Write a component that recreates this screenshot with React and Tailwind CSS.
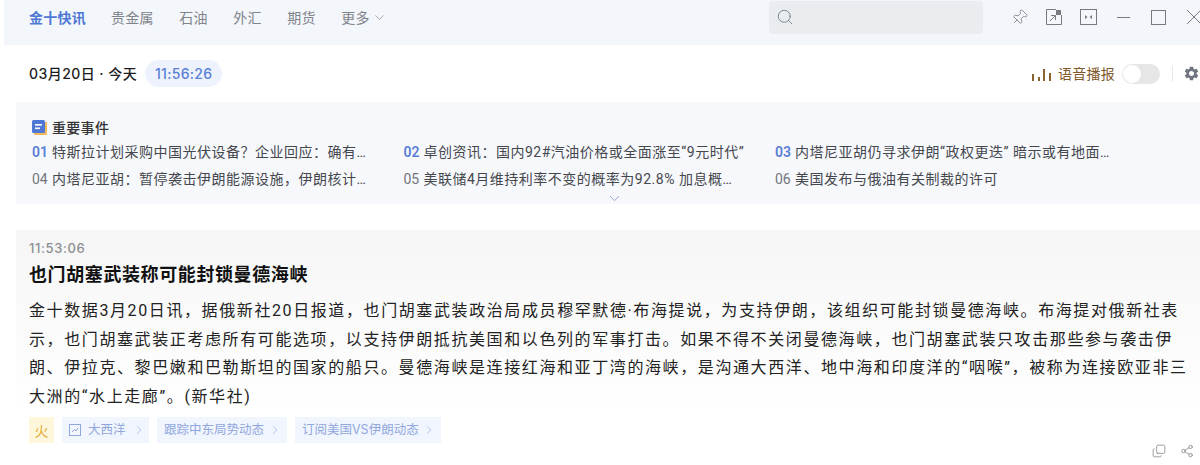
import { ChevronDown, ChevronRight, Search, Copy, Share2, Pin } from 'lucide-react'
import { MdSettings } from 'react-icons/md'

const FONT = 'font-["Inter","Noto_Sans_CJK_SC",sans-serif]'

const TABS = ['贵金属', '石油', '外汇', '期货']

const EVENTS = [
  { no: '01', text: '特斯拉计划采购中国光伏设备？企业回应：确有意向但尚未最终确认', hot: true, w: 'w-[323px]' },
  { no: '02', text: '卓创资讯：国内92#汽油价格或全面涨至“9元时代”', hot: true, w: 'w-[330px]' },
  { no: '03', text: '内塔尼亚胡仍寻求伊朗“政权更迭” 暗示或有地面行动的可能性', hot: true, w: 'w-[323px]' },
  { no: '04', text: '内塔尼亚胡：暂停袭击伊朗能源设施，伊朗核计划已被严重削弱', w: 'w-[323px]' },
  { no: '05', text: '美联储4月维持利率不变的概率为92.8% 加息概率有所上升至百分之七', w: 'w-[315px]' },
  { no: '06', text: '美国发布与俄油有关制裁的许可', w: 'w-[323px]' },
]

function TopBar() {
  return (
    <div className="ml-[4px] h-[45px] pb-[11px] bg-[#f3f6fa] flex items-center pl-[25px] text-[14px] tracking-[0.25px] text-[#81848a] whitespace-nowrap">
      <span className="font-bold text-[#4f78d6]">金十快讯</span>
      <div className="flex gap-[25.5px] ml-[25px]">
        {TABS.map(t => <span key={t}>{t}</span>)}
      </div>
      <span className="ml-[25.5px]">更多</span>
      <ChevronDown size={15} strokeWidth={1.1} className="ml-[2px] shrink-0" />
      <div className="ml-[382px] w-[214px] h-[33px] shrink-0 rounded-[4px] bg-[#e9edf0] flex items-center pl-[7px]">
        <Search size={18} strokeWidth={1.1} className="text-[#6f7479]" />
      </div>
      <div className="flex items-center ml-[28px] text-[#777b80]">
        <Pin size={17} strokeWidth={1.1} className="rotate-45 shrink-0" />
        <svg width="16" height="16" viewBox="0 0 16 16" fill="none" stroke="currentColor" strokeWidth="1" className="ml-[18px] shrink-0">
          <path d="M10 .5H.5v15h15V6" />
          <rect x="10" y="1" width="5" height="5" fill="currentColor" stroke="none" />
          <path d="M4 12 9.500 6.500M5 6.500H9.500V11" />
        </svg>
        <svg width="17" height="16" viewBox="0 0 17 16" fill="none" stroke="currentColor" strokeWidth="1" className="ml-[18px] shrink-0">
          <rect x="0.5" y="0.500" width="16" height="15" />
          <path d="M5 6v4l2.500-2zM12 6v4l-2.500-2z" fill="currentColor" stroke="none" />
        </svg>
        <svg width="14" height="14" viewBox="0 0 14 14" stroke="currentColor" strokeWidth="1" className="ml-[20px] shrink-0">
          <path d="M0 7.500h13" />
        </svg>
        <svg width="15" height="15" viewBox="0 0 15 15" fill="none" stroke="currentColor" strokeWidth="1" className="ml-[20px] shrink-0">
          <rect x="0.500" y="0.500" width="14" height="14" />
        </svg>
        <svg width="14" height="14" viewBox="0 0 14 14" stroke="currentColor" strokeWidth="1" className="ml-[21px] shrink-0">
          <path d="M0 0 14 14M14 0 0 14" />
        </svg>
      </div>
    </div>
  )
}

function DateRow() {
  return (
    <div className="h-[57px] flex items-center pl-[29px] bg-white">
      <span className="text-[14px] font-medium tracking-[0.45px] text-[#1c1c1e] whitespace-pre">03月20日 · 今天</span>
      <span className="ml-[8px] h-[27px] w-[77px] rounded-full bg-[#edf2fc] flex items-center justify-center text-[14px] font-medium tracking-[0.3px] text-[#5a7fd6]">
        11:56:26
      </span>
      <div className="ml-auto flex items-center">
        <svg width="22" height="14" viewBox="0 0 22 14" fill="#8b6331">
          <rect x="1" y="7" width="2" height="7" />
          <rect x="7" y="10" width="2" height="4" />
          <rect x="12" y="2" width="2" height="12" />
          <rect x="18" y="6" width="2" height="8" />
        </svg>
        <span className="ml-[5px] text-[14px] tracking-[0.25px] text-[#80592a]">语音播报</span>
        <div className="ml-[7px] w-[38px] h-[20px] rounded-full bg-[#e6e6e6] flex items-center pl-[1px]">
          <div className="w-[18px] h-[18px] rounded-full bg-white" />
        </div>
        <div className="ml-[12px] w-px h-[16px] bg-[#e8e8e8]" />
        <MdSettings size={17} className="ml-[10px] text-[#6f7580]" />
      </div>
    </div>
  )
}

function Events() {
  return (
    <div className="relative ml-[16px] h-[102px] bg-[#f7f8fc] pt-[17px] pl-[16px]">
      <div className="flex items-center h-[16px]">
        <svg width="15" height="15" viewBox="0 0 15 15">
          <rect x="2" y="2" width="13" height="13" rx="1" fill="#f2b95c" />
          <rect x="0" y="0" width="13" height="13" rx="1.5" fill="#4f78d6" />
          <rect x="3" y="4" width="7" height="1.6" fill="#fff" />
          <rect x="3" y="7.500" width="5" height="1.6" fill="#fff" />
        </svg>
        <span className="ml-[5px] text-[14px] font-medium tracking-[0.3px] text-[#333333]">重要事件</span>
      </div>
      <div className="grid grid-cols-[371.5px_371.5px_371.5px] mt-[4px] font-['Roboto','Noto_Sans_CJK_SC',sans-serif]">
        {EVENTS.map(e => (
          <div key={e.no} className="h-[27px] flex items-center text-[14px] tracking-[0.5px] text-[#44474c]">
            <span className={e.hot ? 'w-[20px] shrink-0 tracking-normal font-semibold text-[#5a7fd6]' : 'w-[20px] shrink-0 tracking-normal text-[#72767b]'}>{e.no}</span>
            <span className={`${e.w} truncate`}>{e.text}</span>
          </div>
        ))}
      </div>
      <ChevronDown size={17} strokeWidth={1} className="absolute left-[590px] bottom-[-3px] text-[#6c84b8]" />
    </div>
  )
}

function Flash() {
  return (
    <div className="ml-[16px] mt-[26px] h-[182px] bg-gradient-to-b from-[#f6f6f6] to-[#ffffff] pl-[13px] pt-[10px]">
      <div className="text-[13px] leading-[16px] font-medium tracking-[0.6px] text-[#8b8e92]">11:53:06</div>
      <h2 className="mt-[7px] text-[18px] leading-[24px] font-bold tracking-[0.6px] text-[#111111]">也门胡塞武装称可能封锁曼德海峡</h2>
      <p className="mt-[10px] w-[1166px] text-[16px] leading-[28.7px] tracking-[1.6px] text-[#222222] font-['Roboto','Noto_Sans_CJK_SC',sans-serif]">
        金十数据3月20日讯，据俄新社20日报道，也门胡塞武装政治局成员穆罕默德·布海提说，为支持伊朗，该组织可能封锁曼德海峡。布海提对俄新社表示，也门胡塞武装正考虑所有可能选项，以支持伊朗抵抗美国和以色列的军事打击。如果不得不关闭曼德海峡，也门胡塞武装只攻击那些参与袭击伊朗、伊拉克、黎巴嫩和巴勒斯坦的国家的船只。曼德海峡是连接红海和亚丁湾的海峡，是沟通大西洋、地中海和印度洋的“咽喉”，被称为连接欧亚非三大洲的“水上走廊”。(新华社)
      </p>
    </div>
  )
}

function Tags() {
  return (
    <div className="relative ml-[29px] mt-[5px] flex gap-[8px] text-[12.5px] text-[#8fa7dd] whitespace-nowrap">
      <span className="w-[25px] h-[26px] bg-[#fff7dc] flex items-center justify-center text-[14px] text-[#e6ae3c]">火</span>
      <span className="h-[26px] w-[87px] bg-[#f1f5fd] flex items-center pl-[7px]">
        <svg width="12" height="12" viewBox="0 0 12 12" fill="none" stroke="currentColor" strokeWidth="1" className="mr-[7px]">
          <rect x="0.5" y="0.5" width="11" height="11" />
          <path d="M3 8 5.500 5.500 7 7 9 4" />
        </svg>
        大西洋
        <ChevronRight size={14} strokeWidth={1.1} className="ml-[6px]" />
      </span>
      <span className="h-[26px] w-[130px] pl-[7px] pr-[5px] bg-[#f1f5fd] flex items-center justify-between">
        跟踪中东局势动态
        <ChevronRight size={14} strokeWidth={1.1} />
      </span>
      <span className="h-[26px] w-[146px] pl-[7px] pr-[5px] bg-[#f1f5fd] flex items-center justify-between">
        订阅美国VS伊朗动态
        <ChevronRight size={14} strokeWidth={1.1} />
      </span>
      <div className="absolute right-[6px] top-[27px] flex items-center gap-[14px] text-[#7e8185]">
        <Copy size={14} strokeWidth={1.3} className="-scale-y-100" />
        <Share2 size={14} strokeWidth={1.3} />
      </div>
    </div>
  )
}

export default function App() {
  return (
    <div className={`w-[1200px] h-[465px] overflow-hidden bg-white ${FONT}`}>
      <TopBar />
      <DateRow />
      <Events />
      <Flash />
      <Tags />
    </div>
  )
}
